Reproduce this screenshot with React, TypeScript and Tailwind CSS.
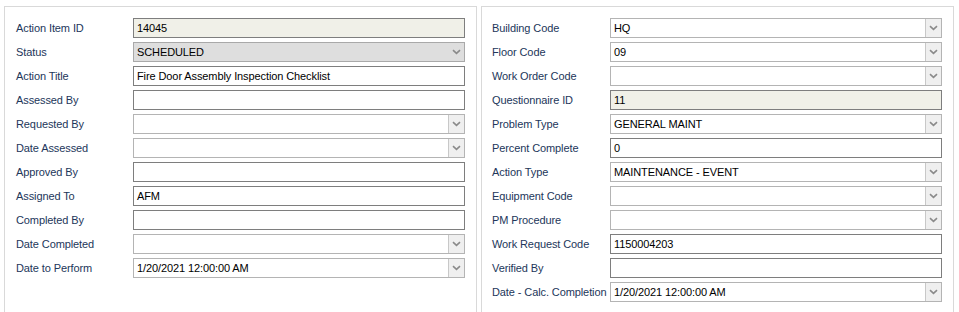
type Kind = 'text' | 'readonly' | 'select' | 'disabled'

type Field = { label: string; kind: Kind; value?: string }

const leftFields: Field[] = [
  { label: 'Action Item ID', kind: 'readonly', value: '14045' },
  { label: 'Status', kind: 'disabled', value: 'SCHEDULED' },
  { label: 'Action Title', kind: 'text', value: 'Fire Door Assembly Inspection Checklist' },
  { label: 'Assessed By', kind: 'text' },
  { label: 'Requested By', kind: 'select' },
  { label: 'Date Assessed', kind: 'select' },
  { label: 'Approved By', kind: 'text' },
  { label: 'Assigned To', kind: 'text', value: 'AFM' },
  { label: 'Completed By', kind: 'text' },
  { label: 'Date Completed', kind: 'select' },
  { label: 'Date to Perform', kind: 'select', value: '1/20/2021 12:00:00 AM' },
]

const rightFields: Field[] = [
  { label: 'Building Code', kind: 'select', value: 'HQ' },
  { label: 'Floor Code', kind: 'select', value: '09' },
  { label: 'Work Order Code', kind: 'select' },
  { label: 'Questionnaire ID', kind: 'readonly', value: '11' },
  { label: 'Problem Type', kind: 'select', value: 'GENERAL MAINT' },
  { label: 'Percent Complete', kind: 'text', value: '0' },
  { label: 'Action Type', kind: 'select', value: 'MAINTENANCE - EVENT' },
  { label: 'Equipment Code', kind: 'select' },
  { label: 'PM Procedure', kind: 'select' },
  { label: 'Work Request Code', kind: 'text', value: '1150004203' },
  { label: 'Verified By', kind: 'text' },
  { label: 'Date - Calc. Completion', kind: 'select', value: '1/20/2021 12:00:00 AM' },
]

const Chevron = () => (
  <svg width="9" height="6" viewBox="0 0 9 6" className="block">
    <path d="M1 1.2 L4.5 4.4 L8 1.2" fill="none" stroke="#8a8a8a" strokeWidth="1.6" />
  </svg>
)

const Input = ({ kind, value }: { kind: Kind; value?: string }) => {
  if (kind === 'select') {
    return (
      <div className="flex h-[20px] w-[332px] border border-[#b4b4b4] bg-white">
        <div className="flex flex-1 items-center overflow-hidden whitespace-nowrap pl-[3px]">{value}</div>
        <div className="flex w-[16px] items-center justify-center border-l border-[#c8c8c8] bg-[#efefef]">
          <Chevron />
        </div>
      </div>
    )
  }
  if (kind === 'disabled') {
    return (
      <div className="flex h-[20px] w-[332px] items-center border border-[#a9a9a9] bg-[#dedede]">
        <div className="flex-1 pl-[3px]">{value}</div>
        <div className="flex w-[16px] items-center justify-center">
          <Chevron />
        </div>
      </div>
    )
  }
  return (
    <div
      className={`flex h-[20px] w-[332px] items-center border border-[#7e7e7e] pl-[3px] ${
        kind === 'readonly' ? 'bg-[#f0f0e8]' : 'bg-white'
      }`}
    >
      {value}
    </div>
  )
}

const Panel = ({ fields, right }: { fields: Field[]; right?: boolean }) => (
  <div
    className={`flex h-[330px] w-[473px] flex-col gap-[4px] border border-[#d9d9d9] bg-white pr-[11px] pt-[11px] ${
      right ? 'pl-[10px]' : 'pl-[11px]'
    }`}
  >
    {fields.map((f) => (
      <div key={f.label} className="flex items-center">
        <div className={`${right ? 'w-[118px]' : 'w-[117px]'} whitespace-nowrap text-[#22365a]`}>{f.label}</div>
        <Input kind={f.kind} value={f.value} />
      </div>
    ))}
  </div>
)

export default function App() {
  return (
    <div
      className="flex h-[312px] w-[959px] gap-[4px] overflow-hidden bg-white pl-[4px] pt-[6px] text-[11px] tracking-[-0.1px] text-black"
      style={{ fontFamily: '"Liberation Sans", Arial, sans-serif' }}
    >
      <Panel fields={leftFields} />
      <Panel fields={rightFields} right />
    </div>
  )
}
